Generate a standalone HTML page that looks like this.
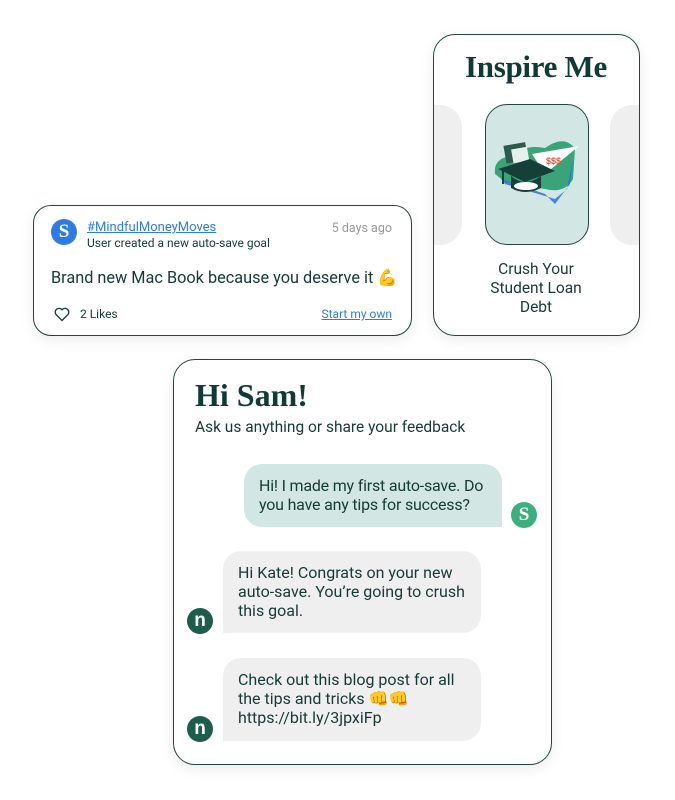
<!DOCTYPE html>
<html><head><meta charset="utf-8"><style>
*{margin:0;padding:0;box-sizing:border-box}
body{width:675px;height:800px;background:#fff;position:relative;overflow:hidden;font-family:"Roboto","Liberation Sans",sans-serif;color:#173a36}
.card{position:absolute;background:#fff;border:1.5px solid #24443f;box-shadow:0 4px 14px rgba(0,0,0,.08)}
.serif{font-family:"Liberation Serif",serif;font-weight:bold;color:#0f3a36}
.abs{position:absolute;white-space:nowrap}
.av{position:absolute;width:26px;height:26px;border-radius:50%;color:#fff;font-family:"Liberation Serif",serif;font-weight:bold;font-size:19px;text-align:center;line-height:26px}
.bub{position:absolute;font-size:16px;line-height:19px;padding:12px 8px 12px 15px;color:#173a36}
</style></head><body>

<div class="card" style="left:433px;top:34px;width:207px;height:302px;border-radius:22px;overflow:hidden">
 <div class="abs serif" style="left:0;width:204px;text-align:center;top:14px;font-size:31px;letter-spacing:-0.3px">Inspire Me</div>
 <div style="position:absolute;left:-20px;top:70px;width:48px;height:140px;background:#efefef;border-radius:22px"></div>
 <div style="position:absolute;left:176px;top:70px;width:48px;height:140px;background:#efefef;border-radius:22px"></div>
 <div style="position:absolute;left:51px;top:69px;width:104px;height:141px;background:#d2e7e3;border:1.5px solid #24443f;border-radius:22px">
  <svg width="104" height="141" viewBox="0 0 104 141" style="position:absolute;left:-1px;top:-1px">
   <path d="M10 70 Q8 55 25 52 Q40 40 60 44 Q80 30 90 45 L88 75 Q80 90 60 85 L20 78Z" fill="#3aa478"/>
   <path d="M16 75 L60 90 L70 100 L85 80 L88 55 L82 85 L70 95 L20 80Z" fill="#2f6fe0" opacity=".85"/>
   <rect x="20" y="40" width="22" height="18" fill="#2c5a4d" transform="rotate(-10 30 50)"/>
   <rect x="27" y="44" width="16" height="14" fill="#e8f0ee" transform="rotate(-10 35 50)"/>
   <path d="M47 50 L94 42 L60 70Z" fill="#fff"/>
   <text x="61" y="60" font-size="9" fill="#e8553a" font-family="Liberation Sans" font-weight="bold">$$$</text>
   <path d="M13 65 L45 55 L70 67 L40 78Z" fill="#15403a"/>
   <path d="M26 72 Q40 84 56 72 L56 84 Q40 92 26 84Z" fill="#15403a"/>
   <ellipse cx="41" cy="82" rx="12" ry="4" fill="#fff"/>
   <line x1="18" y1="66" x2="18" y2="80" stroke="#15403a" stroke-width="2"/>
  </svg>
 </div>
 <div class="abs" style="left:0;width:204px;text-align:center;top:225px;font-size:15.5px;line-height:19px;white-space:normal;color:#173a36">Crush Your<br>Student Loan<br>Debt</div>
</div>

<div class="card" style="left:33px;top:205px;width:379px;height:131px;border-radius:18px">
 <div class="av" style="left:17px;top:13px;background:#2f7be6">S</div>
 <div class="abs" style="left:53px;top:14px;font-size:13px;color:#2f7be6;text-decoration:underline">#MindfulMoneyMoves</div>
 <div class="abs" style="left:53px;top:30px;font-size:12px;color:#173a36">User created a new auto-save goal</div>
 <div class="abs" style="right:19px;top:15px;font-size:12.5px;color:#9a9a9a">5 days ago</div>
 <div class="abs" style="left:17px;top:62px;font-size:16.3px">Brand new Mac Book because you deserve it 💪</div>
 <svg class="abs" style="left:20px;top:101px" width="16" height="15" viewBox="0 0 24 22"><path d="M12 20 L3 11 A5 5 0 0 1 12 4 A5 5 0 0 1 21 11Z" fill="none" stroke="#173a36" stroke-width="2" stroke-linejoin="round"/></svg>
 <div class="abs" style="left:46px;top:101px;font-size:12px">2 Likes</div>
 <div class="abs" style="right:19px;top:101px;font-size:12px;color:#2f7be6;text-decoration:underline">Start my own</div>
</div>

<div class="card" style="left:173px;top:359px;width:379px;height:406px;border-radius:22px">
 <div class="abs serif" style="left:21px;top:17px;font-size:32px">Hi Sam!</div>
 <div class="abs" style="left:21px;top:58px;font-size:15.5px">Ask us anything or share your feedback</div>
 <div class="bub" style="left:70px;top:104px;width:258px;height:63px;background:#d2e7e3;border-radius:18px 18px 0 18px;letter-spacing:-0.2px">Hi! I made my first auto-save. Do you have any tips for success?</div>
 <div class="av" style="left:337px;top:142px;background:#3fae7f">S</div>
 <div class="bub" style="left:49px;top:191px;width:258px;height:82px;background:#efefef;border-radius:18px 18px 18px 0">Hi Kate! Congrats on your new auto-save. You’re going to crush this goal.</div>
 <div class="av" style="left:13px;top:248px;background:#1e5c4c;font-family:'Liberation Sans',sans-serif">n</div>
 <div class="bub" style="left:49px;top:298px;width:258px;height:83px;background:#efefef;border-radius:18px 18px 18px 0">Check out this blog post for all the tips and tricks 👊👊 https://bit.ly/3jpxiFp</div>
 <div class="av" style="left:13px;top:356px;background:#1e5c4c;font-family:'Liberation Sans',sans-serif">n</div>
</div>
</body></html>
